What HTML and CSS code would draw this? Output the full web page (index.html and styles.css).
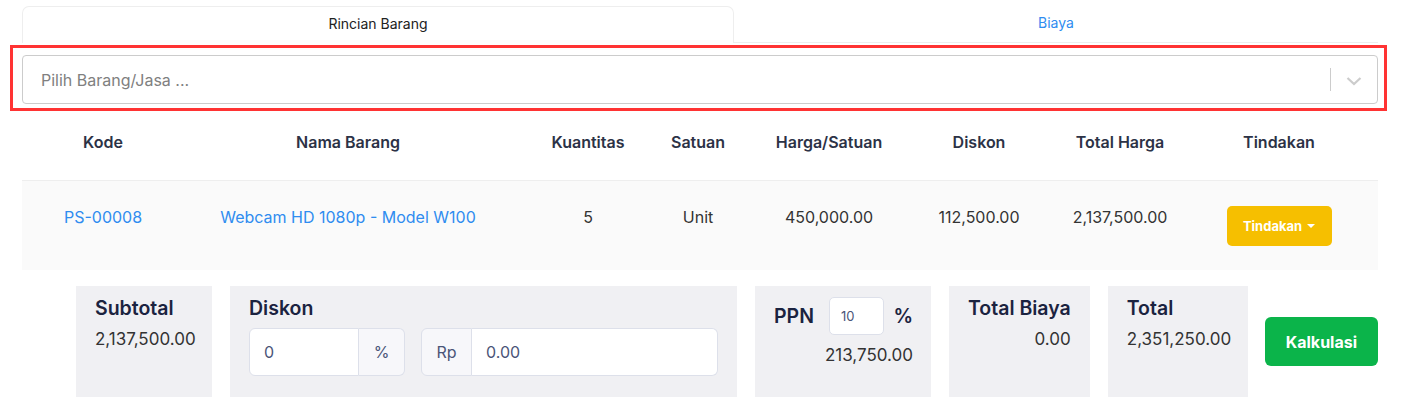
FILE: index.html
```html
<!DOCTYPE html>
<html lang="id">
<head>
<meta charset="utf-8">
<title>Rincian Barang</title>
<link rel="stylesheet" href="styles.css">
</head>
<body>
<div class="page">
  <div class="tabs">
    <div class="tab tab-active">Rincian Barang</div>
    <div class="tab tab-link">Biaya</div>
  </div>

  <div class="highlight">
    <div class="select">
      <span class="placeholder">Pilih Barang/Jasa ...</span>
      <span class="select-sep"></span>
      <span class="select-arrow">
        <svg width="16" height="10" viewBox="0 0 16 10"><path d="M1.5 2 L8 8 L14.5 2" fill="none" stroke="#cccccc" stroke-width="2.2"/></svg>
      </span>
    </div>
  </div>

  <div class="table">
    <div class="trow thead">
      <div class="cell">Kode</div>
      <div class="cell">Nama Barang</div>
      <div class="cell">Kuantitas</div>
      <div class="cell">Satuan</div>
      <div class="cell">Harga/Satuan</div>
      <div class="cell">Diskon</div>
      <div class="cell">Total Harga</div>
      <div class="cell">Tindakan</div>
      <div class="cell"></div>
    </div>
    <div class="trow tbody">
      <div class="cell link">PS-00008</div>
      <div class="cell link">Webcam HD 1080p - Model W100</div>
      <div class="cell">5</div>
      <div class="cell">Unit</div>
      <div class="cell">450,000.00</div>
      <div class="cell">112,500.00</div>
      <div class="cell">2,137,500.00</div>
      <div class="cell"><button class="btn-action">Tindakan <span class="caret"></span></button></div>
      <div class="cell"></div>
    </div>
  </div>

  <div class="summary">
    <div class="box box-subtotal">
      <div class="box-title">Subtotal</div>
      <div class="box-value">2,137,500.00</div>
    </div>
    <div class="box box-diskon">
      <div class="box-title">Diskon</div>
      <div class="disc-row">
        <div class="igroup">
          <div class="ifield ifield-pct">0</div>
          <div class="iaddon iaddon-right">%</div>
        </div>
        <div class="igroup">
          <div class="iaddon iaddon-left">Rp</div>
          <div class="ifield ifield-rp">0.00</div>
        </div>
      </div>
    </div>
    <div class="box box-ppn">
      <div class="ppn-row">
        <span class="box-title">PPN</span>
        <span class="ppn-input">10</span>
        <span class="box-title">%</span>
      </div>
      <div class="box-value align-right">213,750.00</div>
    </div>
    <div class="box box-biaya">
      <div class="box-title">Total Biaya</div>
      <div class="box-value align-right">0.00</div>
    </div>
    <div class="box box-total">
      <div class="box-title">Total</div>
      <div class="box-value">2,351,250.00</div>
    </div>
    <button class="btn-calc">Kalkulasi</button>
  </div>
</div>
</body>
</html>
```

FILE: styles.css
```css
* { box-sizing: border-box; }
html, body { margin: 0; padding: 0; background: #ffffff; }
body {
  font-family: Inter, "Noto Sans", sans-serif;
  color: #333333;
  width: 1415px;
  height: 408px;
  overflow: hidden;
}
.page {
  padding: 6px 0 0 22px;
  width: 1378px;
}

/* tabs */
.tabs {
  display: flex;
  height: 37px;
}
.tab {
  display: flex;
  align-items: center;
  justify-content: center;
  font-size: 14px;
  padding-bottom: 3px;
}
.tab-active {
  width: 712px;
  border: 1px solid #eeeeee;
  border-bottom: none;
  border-radius: 7px 7px 0 0;
  color: #222222;
}
.tab-link {
  flex: 1;
  color: #2f8cf0;
  border-bottom: 1px solid #eeeeee;
}

/* highlighted select */
.highlight {
  margin: 2px -9px 0 -12px;
  border: 3px solid #ff3333;
  padding: 7px 6px 4px 9px;
}
.select {
  height: 49px;
  border: 1px solid #cccccc;
  border-radius: 4px;
  display: flex;
  align-items: center;
  padding-left: 18px;
}
.placeholder {
  flex: 1;
  color: #808080;
  font-size: 16px;
}
.select-sep {
  width: 1px;
  height: 23px;
  background: #cccccc;
}
.select-arrow {
  width: 46px;
  display: flex;
  justify-content: center;
  padding-top: 2px;
}

/* table */
.trow {
  display: grid;
  grid-template-columns: 162px 328px 152px 68px 194px 106px 176px 142px 1fr;
}
.thead {
  height: 69px;
  align-items: center;
  padding-bottom: 7px;
}
.thead .cell {
  font-size: 16px;
  font-weight: 600;
  color: #2c3246;
  text-align: center;
}
.tbody {
  height: 90px;
  background: #fafafa;
  border-top: 1px solid #eeeeee;
  padding-top: 26px;
}
.tbody .cell {
  font-size: 16px;
  color: #333333;
  text-align: center;
  line-height: 20px;
}
.tbody .link { color: #2f8cf0; }
.btn-action {
  margin-top: -1px;
  width: 105px;
  height: 40px;
  border: none;
  border-radius: 5px;
  background: #f6bf00;
  color: #ffffff;
  font-family: Inter, "Noto Sans", sans-serif;
  font-size: 13px;
  font-weight: 700;
  display: inline-flex;
  align-items: center;
  justify-content: center;
  gap: 5px;
}
.caret {
  width: 0;
  height: 0;
  border-left: 4px solid transparent;
  border-right: 4px solid transparent;
  border-top: 4px solid #ffffff;
  margin-top: -1px;
}

/* summary */
.summary {
  display: flex;
  align-items: center;
  gap: 18px;
  margin-top: 16px;
  padding-left: 54px;
}
.box {
  height: 111px;
  background: #f0f0f3;
  padding: 10px 19px 0 19px;
}
.box-title {
  font-size: 19.5px;
  font-weight: 600;
  color: #1b2340;
  line-height: 24px;
  white-space: nowrap;
}
.box-value {
  font-size: 17px;
  color: #333333;
  margin-top: 8px;
  line-height: 22px;
  white-space: nowrap;
}
.align-right { text-align: right; }
.box-subtotal { width: 136px; }
.box-diskon { width: 507px; padding-right: 20px; }
.box-ppn { width: 176px; padding-right: 18px; }
.box-biaya { width: 141px; }
.box-total { width: 140px; }

.disc-row {
  display: flex;
  gap: 16px;
  margin-top: 8px;
}
.igroup { display: flex; height: 48px; }
.ifield {
  background: #ffffff;
  border: 1px solid #dde0ea;
  display: flex;
  align-items: center;
  padding-left: 14px;
  font-size: 16px;
  color: #4a5578;
}
.ifield-pct { width: 110px; border-radius: 6px 0 0 6px; }
.ifield-rp { flex: 1; width: 246px; border-radius: 0 6px 6px 0; border-left: none; }
.iaddon {
  background: #f7f7fa;
  border: 1px solid #dde0ea;
  display: flex;
  align-items: center;
  justify-content: center;
  font-size: 16px;
  color: #4a5578;
}
.iaddon-right { width: 46px; border-left: none; border-radius: 0 6px 6px 0; }
.iaddon-left { width: 51px; border-radius: 6px 0 0 6px; }

.ppn-row {
  display: flex;
  align-items: center;
  margin-top: 1px;
}
.ppn-input {
  width: 56px;
  height: 38px;
  margin: 0 9px 0 15px;
  background: #ffffff;
  border: 1px solid #dde0ea;
  border-radius: 5px;
  display: flex;
  align-items: center;
  padding-left: 11px;
  font-size: 13px;
  color: #4a5578;
}
.box-ppn .box-value { margin-top: 9px; }

.btn-calc {
  width: 115px;
  height: 49px;
  border: none;
  border-radius: 6px;
  background: #0bb44a;
  color: #ffffff;
  font-family: Inter, "Noto Sans", sans-serif;
  font-size: 16px;
  font-weight: 700;
  margin-left: -1px;
}
```
